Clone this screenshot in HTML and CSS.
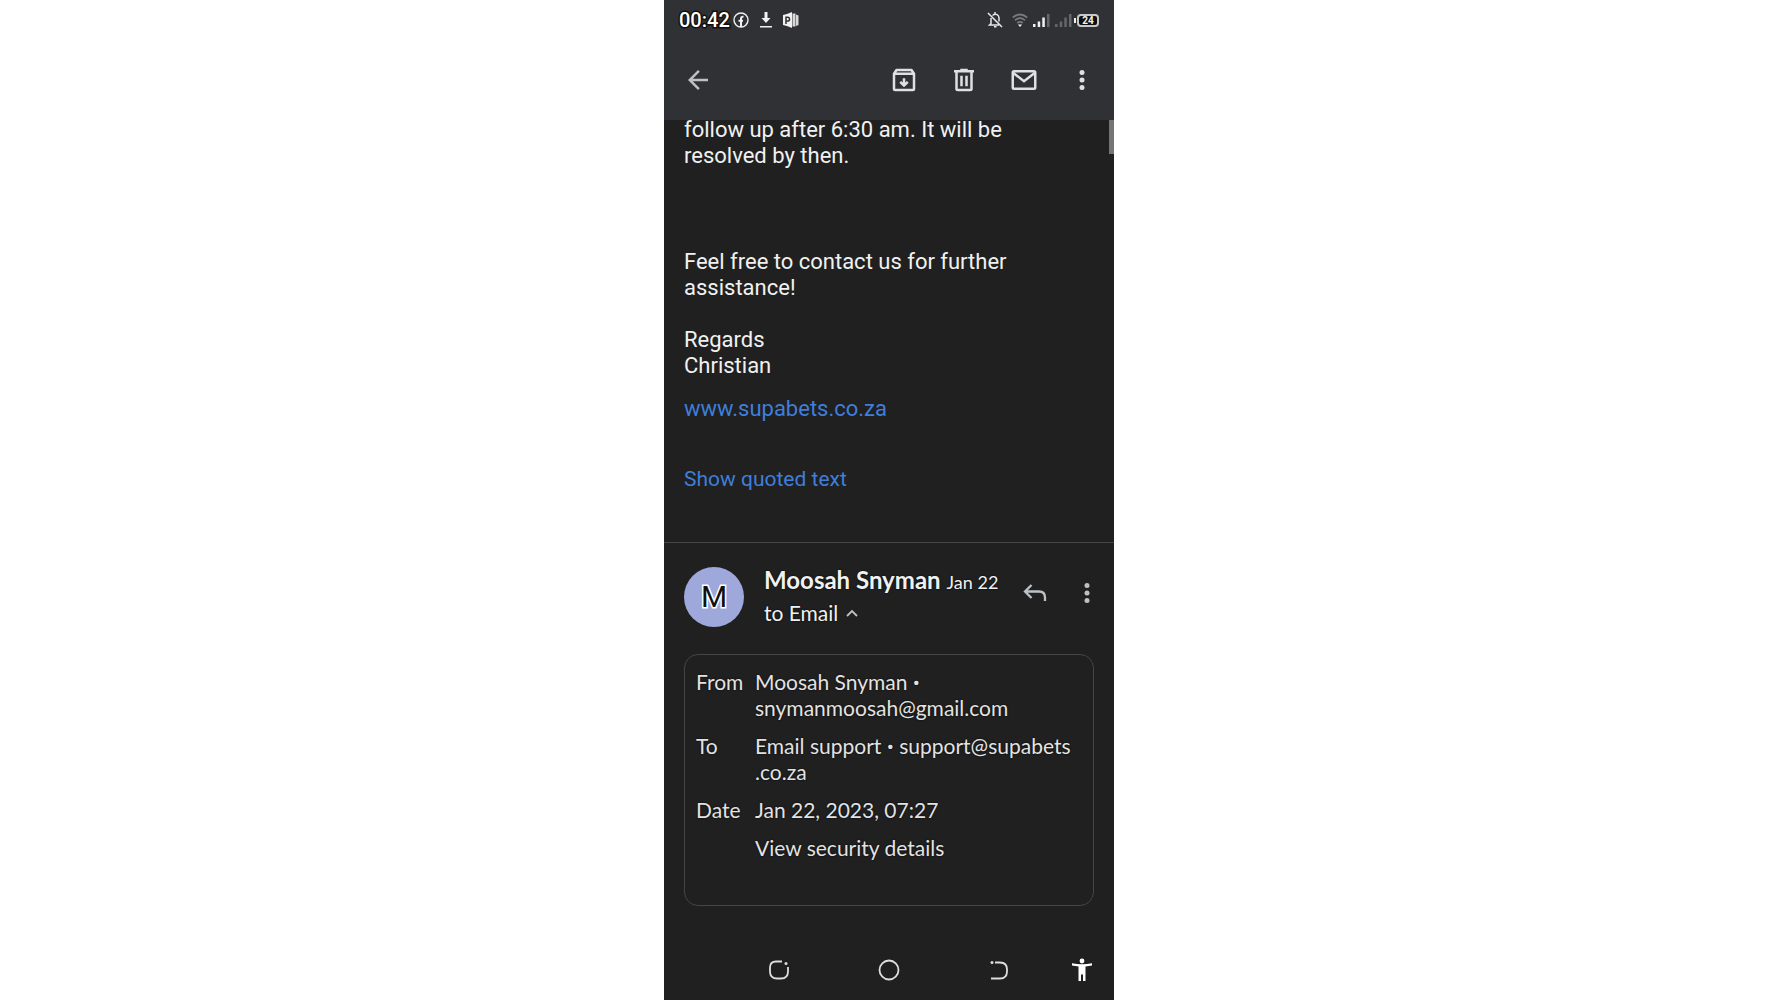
FILE: index.html
```html
<!DOCTYPE html>
<html lang="en">
<head>
  <meta charset="UTF-8">
  <meta name="viewport" content="width=device-width, initial-scale=1.0">
  <title>Mail</title>
  <link rel="stylesheet" href="styles.css">
</head>
<body>
  <div class="phone">
    <header class="header">
      <div class="status-bar">
        <span class="clock">00:42</span>
        <div class="status-left">
          <svg width="16" height="16" viewBox="0 0 16 16" fill="none" stroke="#f1f1f1">
            <circle cx="8" cy="8" r="7" stroke-width="1.4"/>
            <path d="M8 15V6.500q0-2 2.500-1.700M5.500 8.700h4.500" stroke-width="2"/>
          </svg>
          <svg width="14" height="16" viewBox="0 0 14 16" fill="#f1f1f1">
            <path d="M5.500 0h3v6h3L7 11 2.500 6h3zM1 14h12v1.600H1z"/>
          </svg>
          <svg width="16" height="16" viewBox="0 0 16 16" fill="#f1f1f1">
            <path d="M0 3l4-1 5-2v16l-5-2-4-1z"/>
            <path d="M9.500 1.500h3v13h-3zM13 2.500l2.500 1v9.500l-2.500 1z" fill="#d8d8d8"/>
            <path d="M3 12V5.200h1.600a1.900 1.900 0 0 1 0 3.900H3" fill="none" stroke="#303134" stroke-width="1.500"/>
          </svg>
        </div>
        <div class="status-right">
          <svg width="16" height="16" viewBox="0 0 16 16" fill="none" stroke="#e8e8e8" stroke-width="1.500">
            <path d="M5.500 3.500C9 .5 12 3.500 12 6v3.500M4 6v5.500L2.500 13H12M8 0v2M7 14.800h2.500M1 1l14 14"/>
          </svg>
          <svg class="wifi" width="16" height="14" viewBox="0 0 16 14" fill="none" stroke="#77787a" stroke-width="1.700">
            <path d="M.8 4.500q7.200-6 14.400 0M3 7.300q5-4.200 10 0M5.200 10q2.800-2.300 5.600 0"/>
            <path d="M6 11.500h4l-2 2.500z" fill="#f1f1f1" stroke="none"/>
          </svg>
          <svg width="17" height="14" viewBox="0 0 17 14" fill="#f1f1f1">
            <path d="M0 11h2.500v3H0zM4.700 8.500h2.500V14H4.700zM9.300 4.500h2.500V14H9.300z"/>
            <path d="M14 1h2.500v13H14z" fill="#66676a"/>
          </svg>
          <svg width="17" height="14" viewBox="0 0 17 14" fill="#66676a">
            <path d="M0 11h2.500v3H0zM4.700 8.500h2.500V14H4.700zM9.300 4.500h2.500V14H9.300zM14 1h2.500v13H14z"/>
          </svg>
          <span class="battery">24</span>
        </div>
      </div>
      <div class="toolbar">
        <button type="button" class="icon-button back" aria-label="Back">
          <svg width="30" height="30" viewBox="0 0 24 24" fill="#bdc1c6"><path d="M20 11H7.830l5.590-5.590L12 4l-8 8 8 8 1.410-1.410L7.830 13H20v-2z"/></svg>
        </button>
        <button type="button" class="icon-button" aria-label="Archive">
          <svg width="30" height="30" viewBox="0 0 24 24" fill="none" stroke="#dfe0e2" stroke-width="2">
            <path d="M4 7v12q0 1 1 1h14q1 0 1-1V7l-2-3H6zM4 7h16M12 10.500v6M9 13.500l3 3 3-3" stroke-linejoin="round"/>
          </svg>
        </button>
        <button type="button" class="icon-button" aria-label="Delete">
          <svg width="30" height="30" viewBox="0 0 24 24" fill="none" stroke="#dfe0e2" stroke-width="2">
            <path d="M4 5h16M9 4h6M6 5v14q0 1 1 1h10q1 0 1-1V5M10 8.500v8.500M14 8.500v8.500"/>
          </svg>
        </button>
        <button type="button" class="icon-button" aria-label="Mark as unread">
          <svg width="30" height="30" viewBox="0 0 24 24" fill="none" stroke="#dfe0e2" stroke-width="2">
            <rect x="3" y="5" width="18" height="14" rx="1"/>
            <path d="M3 6l9 7 9-7"/>
          </svg>
        </button>
        <button type="button" class="icon-button more" aria-label="More options">
          <svg width="30" height="30" viewBox="0 0 24 24" fill="#dfe0e2"><circle cx="12" cy="6" r="2"/><circle cx="12" cy="12" r="2"/><circle cx="12" cy="18" r="2"/></svg>
        </button>
      </div>
    </header>

    <main class="content">
      <div class="scrollbar"></div>
      <section class="message">
        <p class="follow">follow up after 6:30 am. It will be<br>resolved by then.</p>
        <p>Feel free to contact us for further<br>assistance!</p>
        <p class="regards">Regards<br>Christian</p>
        <a href="#" class="site-link">www.supabets.co.za</a>
        <a href="#" class="quoted-link">Show quoted text</a>
      </section>

      <section class="sender">
        <div class="avatar">M</div>
        <div class="sender-info">
          <div class="sender-line"><h2>Moosah Snyman</h2><span class="date">Jan 22</span></div>
          <button type="button" class="recipient">to Email
            <svg width="12" height="8" viewBox="0 0 12 8" fill="none" stroke="#bdc1c6" stroke-width="1.800"><path d="M1 7l5-5 5 5"/></svg>
          </button>
        </div>
        <button type="button" class="icon-button reply" aria-label="Reply">
          <svg width="24" height="20" viewBox="0 0 24 20" fill="none" stroke="#bdc1c6" stroke-width="2.300"><path d="M8.500 2L2 8.500 8.500 15M2 8.500h14q6 0 6 6V18"/></svg>
        </button>
        <button type="button" class="icon-button message-more" aria-label="More message options">
          <svg width="30" height="30" viewBox="0 0 24 24" fill="#bdc1c6"><circle cx="12" cy="6" r="2"/><circle cx="12" cy="12" r="2"/><circle cx="12" cy="18" r="2"/></svg>
        </button>
      </section>

      <dl class="details">
        <dt>From</dt>
        <dd>Moosah Snyman <span class="dot">•</span><br>snymanmoosah@gmail.com</dd>
        <dt>To</dt>
        <dd>Email support <span class="dot">•</span> support@supabets<br>.co.za</dd>
        <dt>Date</dt>
        <dd>Jan 22, 2023, 07:27</dd>
        <dd class="security"><a href="#">View security details</a></dd>
      </dl>
    </main>

    <nav class="nav-bar">
      <button type="button" class="nav-button" aria-label="Recent apps">
        <svg width="20" height="20" viewBox="0 0 20 20" fill="none" stroke="#dedede" stroke-width="1.800">
          <path d="M13 1.500H7Q1 1.500 1 7.500v4q0 7 7 7h4q7 0 7-7V7"/>
          <circle cx="17" cy="3.500" r="1.500" fill="#dedede" stroke="none"/>
        </svg>
      </button>
      <button type="button" class="nav-button" aria-label="Home">
        <svg width="22" height="22" viewBox="0 0 22 22" fill="none" stroke="#dedede" stroke-width="1.800"><circle cx="11" cy="11" r="9.500"/></svg>
      </button>
      <button type="button" class="nav-button" aria-label="Back">
        <svg width="20" height="20" viewBox="0 0 20 20" fill="none" stroke="#dedede" stroke-width="1.800">
          <path d="M6 2.500h5q7 0 7 7v2q0 7-7 7H2"/>
          <circle cx="3" cy="2.500" r="1.500" fill="#dedede" stroke="none"/>
        </svg>
      </button>
      <button type="button" class="nav-button accessibility" aria-label="Accessibility">
        <svg width="20" height="24" viewBox="0 0 20 24" fill="#fff"><circle cx="10" cy="3" r="2.400"/><path d="M0 5.200q10 2 20 0v2.300l-6.500 1V23h-2.500v-6.500H9V23H6.500V8.500L0 7.500z"/></svg>
      </button>
    </nav>
  </div>
</body>
</html>
```

FILE: styles.css
```css
* {
  margin: 0;
  padding: 0;
  box-sizing: border-box;
}

body {
  font-family: Roboto, Arial, sans-serif;
  background: #ffffff;
}

button {
  font: inherit;
  color: inherit;
  background: none;
  border: none;
  cursor: pointer;
}

a {
  color: #3f7edb;
  text-decoration: none;
}

svg {
  display: block;
  flex-shrink: 0;
}

.phone {
  display: flex;
  flex-direction: column;
  width: 100%;
  max-width: 450px;
  min-height: 100vh;
  margin: 0 auto;
  background: #202020;
  color: #f1f1f1;
}

/* top bars */
.header {
  position: relative;
  z-index: 1;
  height: 120px;
  background: #303134;
}

.status-bar {
  display: flex;
  align-items: center;
  height: 40px;
  padding: 0 15px;
}

.clock {
  font-size: 20px;
  font-weight: 500;
  color: #ffffff;
  -webkit-text-stroke: 3px #101010;
  paint-order: stroke fill;
}

.status-left {
  display: flex;
  gap: 10px;
  margin-left: 3px;
}

.status-right {
  display: flex;
  align-items: center;
  gap: 5px;
  margin-left: auto;
}

.wifi {
  margin-left: 4px;
}

.battery {
  position: relative;
  width: 22px;
  height: 13px;
  border: 2px solid #c8c8c8;
  border-radius: 4px;
  background: #101010;
  font-size: 10px;
  font-weight: 700;
  line-height: 9px;
  text-align: center;
}

.battery::before {
  content: "";
  position: absolute;
  top: 2px;
  left: -5px;
  width: 2px;
  height: 5px;
  background: #f1f1f1;
}

.toolbar {
  display: flex;
  align-items: center;
  height: 80px;
  padding: 0 4px;
}

.icon-button {
  display: flex;
  align-items: center;
  justify-content: center;
  width: 60px;
  height: 60px;
}

.back {
  margin-right: auto;
}

.more {
  width: 56px;
}

/* message */
.content {
  position: relative;
  flex: 1;
}

.scrollbar {
  position: absolute;
  top: 0;
  right: 0;
  width: 5px;
  height: 34px;
  background: #757575;
}

.message {
  margin-top: -3px;
  padding: 0 20px 50px;
  border-bottom: 1px solid #444547;
  font-size: 22px;
  line-height: 26px;
}

.follow {
  margin-bottom: 80px;
}

.regards {
  margin-top: 26px;
}

.site-link,
.quoted-link {
  display: block;
}

.site-link {
  margin-top: 17px;
}

.quoted-link {
  margin-top: 44px;
  font-size: 21px;
}

/* sender */
.sender {
  display: flex;
  padding: 24px 0 0 20px;
  font-family: Lato, sans-serif;
}

.avatar {
  width: 60px;
  height: 60px;
  border-radius: 50%;
  background: #9fa8da;
  color: #101010;
  font-family: Roboto, sans-serif;
  font-size: 30px;
  line-height: 60px;
  text-align: center;
  -webkit-text-stroke: 3px #ffffff;
  paint-order: stroke fill;
}

.sender-info {
  flex: 1;
  margin-left: 20px;
  white-space: nowrap;
}

.sender-line {
  display: flex;
  align-items: baseline;
  gap: 6px;
  line-height: 26px;
}

.sender h2 {
  font-size: 24px;
  font-weight: 700;
}

.date {
  font-size: 18px;
}

.sender-line,
.recipient,
.details {
  text-shadow: 0 0 2px #000000;
}

.recipient {
  display: flex;
  align-items: center;
  gap: 8px;
  margin-top: 5px;
  font-size: 21px;
  line-height: 26px;
}

.reply,
.message-more {
  height: 52px;
}

.reply {
  width: 50px;
}

.message-more {
  width: 54px;
}

/* details card */
.details {
  display: grid;
  grid-template-columns: 59px 1fr;
  row-gap: 12px;
  align-content: start;
  margin: 27px 20px 0;
  padding: 14px 11px 44px;
  border: 1px solid #444547;
  border-radius: 14px;
  color: #e3e3e3;
  font-family: Lato, sans-serif;
  font-size: 21px;
  line-height: 26px;
  white-space: nowrap;
}

.dot {
  font-family: Roboto, sans-serif;
  line-height: 1;
}

.security {
  grid-column: 2;
}

.security a {
  color: inherit;
}

/* system navigation */
.nav-bar {
  display: flex;
  justify-content: flex-end;
  height: 60px;
  padding-right: 4px;
}

.nav-button {
  display: flex;
  align-items: center;
  justify-content: center;
  width: 110px;
  height: 60px;
}

.accessibility {
  width: 56px;
}
```
